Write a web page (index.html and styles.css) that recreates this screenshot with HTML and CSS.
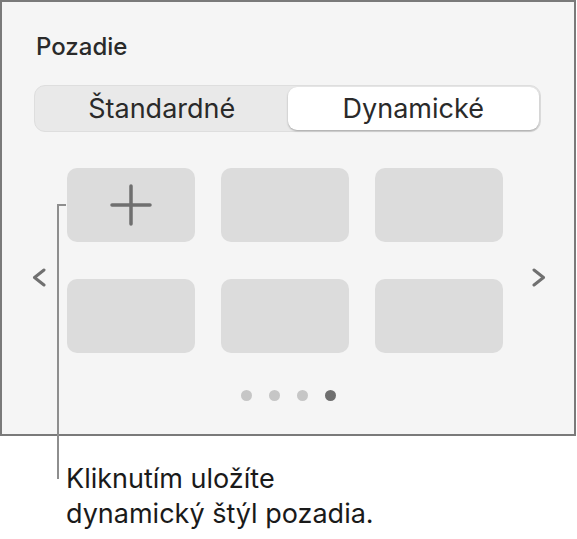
FILE: index.html
```html
<!DOCTYPE html>
<html lang="sk">
<head>
    <meta charset="UTF-8">
    <title>Pozadie</title>
    <meta name="viewport" content="width=device-width, initial-scale=1.0">
    <link rel="stylesheet" href="styles.css">
</head>
<body>
    <div class="page">
        <div class="panel">
            <h2 class="title">Pozadie</h2>
            <div class="segmented">
                <button class="seg">Štandardné</button>
                <button class="seg active">Dynamické</button>
            </div>
            <div class="carousel">
                <span class="chev chev-left">
                    <svg width="14" height="19" viewBox="0 0 14 19"><path d="M12 2 L2.5 9.5 L12 17" fill="none" stroke="#707070" stroke-width="3" stroke-linecap="round" stroke-linejoin="round"/></svg>
                </span>
                <div class="tiles">
                    <div class="tile add">
                        <svg width="42" height="42" viewBox="0 0 42 42"><path d="M21 2 V40 M2 21 H40" stroke="#6f6f6f" stroke-width="3.5" stroke-linecap="round"/></svg>
                    </div>
                    <div class="tile"></div>
                    <div class="tile"></div>
                    <div class="tile"></div>
                    <div class="tile"></div>
                    <div class="tile"></div>
                </div>
                <span class="chev chev-right">
                    <svg width="14" height="19" viewBox="0 0 14 19"><path d="M2 2 L11.5 9.5 L2 17" fill="none" stroke="#707070" stroke-width="3" stroke-linecap="round" stroke-linejoin="round"/></svg>
                </span>
            </div>
            <div class="dots">
                <span class="dot"></span>
                <span class="dot"></span>
                <span class="dot"></span>
                <span class="dot current"></span>
            </div>
        </div>

        <p class="callout">Kliknutím uložíte<br>dynamický štýl pozadia.</p>

        <!-- callout leader from the add tile down to the caption -->
        <span class="leader-h"></span>
        <span class="leader-v"></span>
    </div>
</body>
</html>
```

FILE: styles.css
```css
body {
    margin: 0;
    background: #fff;
    font-family: 'Inter', 'Noto Sans', sans-serif;
    color: #222;
}
.page {
    position: relative;
    width: 577px;
    height: 539px;
}
.panel {
    box-sizing: border-box;
    width: 576px;
    height: 436px;
    border: 2px solid #7a7a7a;
    background: #f5f5f5;
    padding-top: 31px;
}
.title {
    margin: 0 0 0 34px;
    font-size: 24px;
    line-height: 28px;
    font-weight: 500;
    color: #2a2a2a;
}
.segmented {
    display: flex;
    box-sizing: border-box;
    width: 507px;
    height: 47px;
    margin: 24px 0 0 32px;
    padding: 1px;
    background: #e9e9e9;
    border: 1px solid #dedede;
    border-radius: 11px;
}
.seg {
    flex: 1;
    border: none;
    background: transparent;
    font-family: inherit;
    font-size: 27px;
    color: #2a2a2a;
    border-radius: 9px;
    padding: 0;
}
.seg.active {
    background: #fff;
    box-shadow: 0 1px 2px rgba(0, 0, 0, 0.3);
}
.carousel {
    display: flex;
    align-items: center;
    margin-top: 36px;
    padding-left: 30px;
}
.chev {
    display: flex;
    margin-top: 33px;
}
.tiles {
    display: grid;
    grid-template-columns: repeat(3, 128px);
    grid-template-rows: repeat(2, 74px);
    column-gap: 26px;
    row-gap: 37px;
    margin: 0 29px 0 21px;
}
.tile {
    background: #dcdcdc;
    border-radius: 10px;
}
.tile.add {
    display: flex;
    align-items: center;
    justify-content: center;
}
.dots {
    display: flex;
    justify-content: center;
    gap: 17px;
    margin-top: 37px;
}
.dot {
    width: 11px;
    height: 11px;
    border-radius: 50%;
    background: #c6c6c6;
}
.dot.current {
    background: #6f6f6f;
}
.callout {
    margin: 25px 0 0 66px;
    font-size: 27px;
    line-height: 35px;
    color: #1a1a1a;
}
.leader-h {
    position: absolute;
    left: 57px;
    top: 204px;
    width: 9px;
    height: 2px;
    background: #8e8e8e;
}
.leader-v {
    position: absolute;
    left: 57px;
    top: 204px;
    width: 2px;
    height: 275px;
    background: #8e8e8e;
}
```
